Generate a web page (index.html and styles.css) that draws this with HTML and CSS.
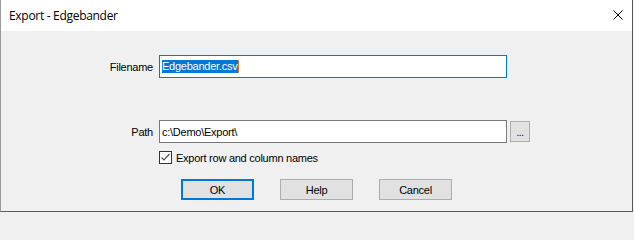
FILE: index.html
```html
<!DOCTYPE html>
<html>
<head>
<meta charset="utf-8">
<link rel="stylesheet" href="styles.css">
</head>
<body>
<div class="window">
  <div class="titlebar">
    <span class="title">Export - Edgebander</span>
    <span class="close">
      <svg width="10" height="10" viewBox="0 0 10 10"><path d="M0.5 0.5 L9.5 9.5 M9.5 0.5 L0.5 9.5" stroke="#000" stroke-width="1" fill="none"/></svg>
    </span>
  </div>
  <div class="content">
    <div class="row row-file">
      <label class="lbl">Filename</label>
      <div class="input input-focus"><span class="sel">Edgebander.csv</span><span class="caret"></span></div>
    </div>
    <div class="row row-path">
      <label class="lbl">Path</label>
      <div class="input">c:\Demo\Export\</div>
      <div class="browse">...</div>
    </div>
    <div class="check-row">
      <span class="checkbox">
        <svg width="11" height="11" viewBox="0 0 11 11"><path d="M1.5 5.5 L4 8 L9.5 2" stroke="#555" stroke-width="1.2" fill="none"/></svg>
      </span>
      <span class="check-label">Export row and column names</span>
    </div>
    <div class="buttons">
      <div class="btn btn-default">OK</div>
      <div class="btn">Help</div>
      <div class="btn">Cancel</div>
    </div>
  </div>
</div>
</body>
</html>
```

FILE: styles.css
```css
html, body {
  margin: 0;
  padding: 0;
  background: #f0f0f0;
}
body {
  width: 634px;
  height: 213px;
  overflow: hidden;
}
.window {
  width: 631px;
  height: 211px;
  border-left: 1px solid #9a9a9a;
  border-right: 1px solid #5a5a5a;
  border-bottom: 1px solid #5a5a5a;
  background: #f0f0f0;
  display: flex;
  flex-direction: column;
}
.titlebar {
  height: 31px;
  background: #ffffff;
  display: flex;
  align-items: center;
  justify-content: space-between;
  flex-shrink: 0;
}
.title {
  font-family: "Open Sans", "Noto Sans", sans-serif;
  font-size: 12px;
  letter-spacing: -0.3px;
  color: #000;
  margin-left: 8px;
  margin-top: -1px;
}
.close {
  width: 10px;
  height: 10px;
  margin-right: 9px;
  margin-top: -1px;
  display: flex;
}
.content {
  font-family: "Liberation Sans", Arial, sans-serif;
  font-size: 11px;
  letter-spacing: -0.25px;
  color: #000;
  padding-top: 24px;
  display: flex;
  flex-direction: column;
}
.row {
  display: flex;
  align-items: center;
}
.row-path {
  margin-top: 42px;
}
.lbl {
  width: 152px;
  text-align: right;
  margin-right: 6px;
  padding-top: 1px;
}
.input {
  box-sizing: border-box;
  width: 348px;
  height: 23px;
  background: #fff;
  border: 1px solid #7a7a7a;
  padding-left: 2px;
  display: flex;
  align-items: center;
  white-space: pre;
}
.input-focus {
  border-color: #0078d7;
}
.sel {
  background: #0078d7;
  color: #fff;
  line-height: 13px;
  padding-right: 1px;
}
.caret {
  width: 1px;
  height: 13px;
  background: #e07a20;
}
.browse {
  box-sizing: border-box;
  width: 20px;
  height: 21px;
  margin-left: 3px;
  background: #e1e1e1;
  border: 1px solid #adadad;
  display: flex;
  align-items: center;
  justify-content: center;
  font-size: 10px;
  padding-top: 2px;
  letter-spacing: -0.5px;
}
.check-row {
  display: flex;
  align-items: center;
  margin-top: 8px;
  margin-left: 158px;
  height: 13px;
}
.checkbox {
  box-sizing: border-box;
  width: 13px;
  height: 13px;
  border: 1px solid #333;
  background: #fff;
  display: flex;
  align-items: center;
  justify-content: center;
}
.check-label {
  margin-left: 4px;
}
.buttons {
  display: flex;
  gap: 26px;
  margin-top: 15px;
  margin-left: 180px;
}
.btn {
  box-sizing: border-box;
  width: 73px;
  height: 21px;
  background: #e1e1e1;
  border: 1px solid #adadad;
  display: flex;
  align-items: center;
  justify-content: center;
}
.btn-default {
  border: 2px solid #0078d7;
}
```
